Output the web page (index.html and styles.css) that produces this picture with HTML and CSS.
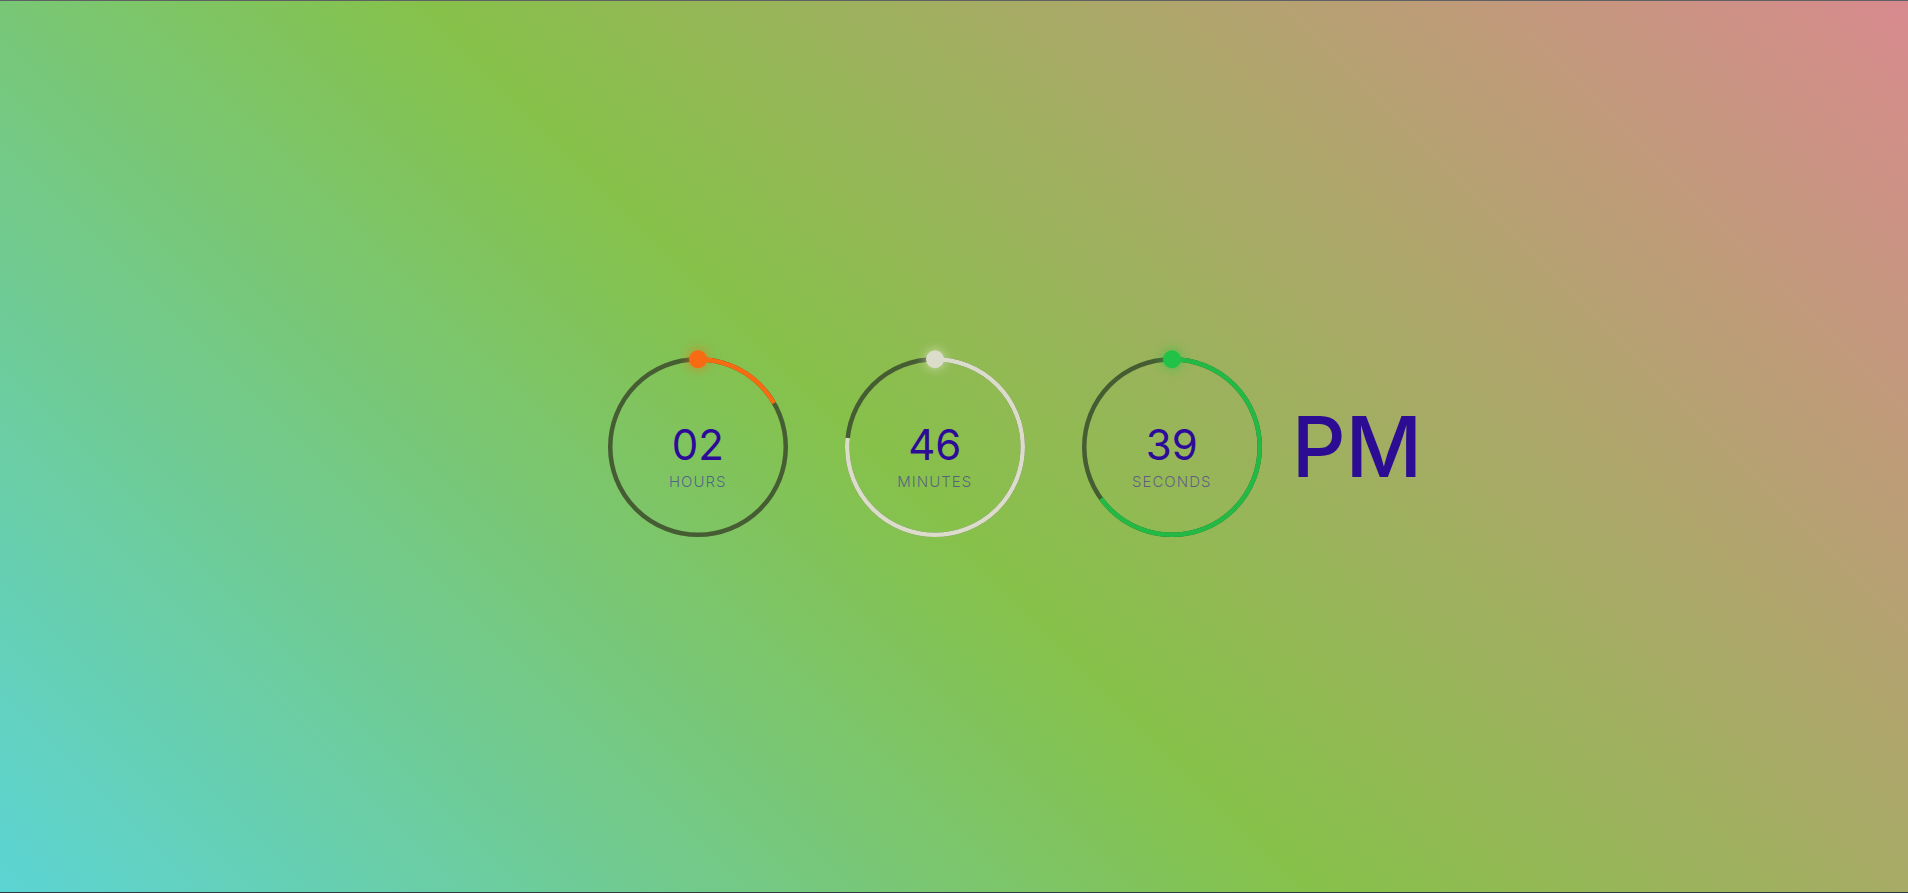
FILE: index.html
```html
<!DOCTYPE html>
<html lang="en">
<head>
<meta charset="utf-8">
<title>Clock</title>
<link rel="stylesheet" href="styles.css">
</head>
<body>
<div class="page">
  <div class="clock">
    <div class="dial dial-hours">
      <svg class="ring" viewBox="0 0 180 180" width="180" height="180">
        <circle class="track" cx="90" cy="90" r="87.75"/>
        <circle class="arc" cx="90" cy="90" r="87.75" pathLength="100" stroke-dasharray="16.667 100"/>
        <circle class="dot" cx="90" cy="2.25" r="9"/>
      </svg>
      <div class="readout">
        <div class="value">02</div>
        <div class="label">HOURS</div>
      </div>
    </div>
    <div class="dial dial-minutes">
      <svg class="ring" viewBox="0 0 180 180" width="180" height="180">
        <circle class="track" cx="90" cy="90" r="87.75"/>
        <circle class="arc" cx="90" cy="90" r="87.75" pathLength="100" stroke-dasharray="76.667 100"/>
        <circle class="dot" cx="90" cy="2.25" r="9"/>
      </svg>
      <div class="readout">
        <div class="value">46</div>
        <div class="label">MINUTES</div>
      </div>
    </div>
    <div class="dial dial-seconds">
      <svg class="ring" viewBox="0 0 180 180" width="180" height="180">
        <circle class="track" cx="90" cy="90" r="87.75"/>
        <circle class="arc" cx="90" cy="90" r="87.75" pathLength="100" stroke-dasharray="65 100"/>
        <circle class="dot" cx="90" cy="2.25" r="9"/>
      </svg>
      <div class="readout">
        <div class="value">39</div>
        <div class="label">SECONDS</div>
      </div>
    </div>
    <div class="ampm">PM</div>
  </div>
</div>
</body>
</html>
```
FILE: styles.css
```css
html, body {
  margin: 0;
  padding: 0;
}

body {
  font-family: "Inter", "Liberation Sans", sans-serif;
}

.page {
  box-sizing: border-box;
  height: 100vh;
  border-top: 1px solid #5e6064;
  border-bottom: 1px solid #2f3a40;
  background: linear-gradient(45deg, #5cd4d4 0%, #86c14a 47%, #d88a8e 100%);
  display: flex;
  align-items: center;
  justify-content: center;
}

.clock {
  display: flex;
  align-items: center;
  gap: 57px;
  padding-left: 122px;
}

.dial {
  display: grid;
  width: 180px;
  height: 180px;
}

.ring,
.readout {
  grid-area: 1 / 1;
}

.ring {
  overflow: visible;
}

.track {
  fill: none;
  stroke: #465d33;
  stroke-width: 4.5;
}

.arc {
  fill: none;
  stroke-width: 4.5;
  transform: rotate(-90deg);
  transform-origin: 90px 90px;
}

.dial-hours .arc { stroke: #f96b12; }
.dial-minutes .arc { stroke: #dcdcca; }
.dial-seconds .arc { stroke: #22b944; }

.dial-hours .dot { fill: #f96b12; filter: drop-shadow(0 0 6px rgba(249, 107, 18, 0.75)); }
.dial-minutes .dot { fill: #dcdcca; filter: drop-shadow(0 0 6px rgba(230, 230, 210, 0.8)); }
.dial-seconds .dot { fill: #22c148; filter: drop-shadow(0 0 6px rgba(34, 193, 72, 0.75)); }

.readout {
  align-self: center;
  justify-self: center;
  display: flex;
  flex-direction: column;
  align-items: center;
  margin-top: 19px;
}

.value {
  font-size: 42px;
  line-height: 1;
  font-weight: 400;
  color: #2d0b99;
}

.label {
  margin-top: 8px;
  font-size: 15px;
  line-height: 1;
  font-weight: 300;
  letter-spacing: 1px;
  color: rgba(52, 22, 165, 0.58);
}

.ampm {
  margin-left: -27px;
  font-size: 84px;
  line-height: 1;
  font-weight: 500;
  color: #2c0c93;
}
```
